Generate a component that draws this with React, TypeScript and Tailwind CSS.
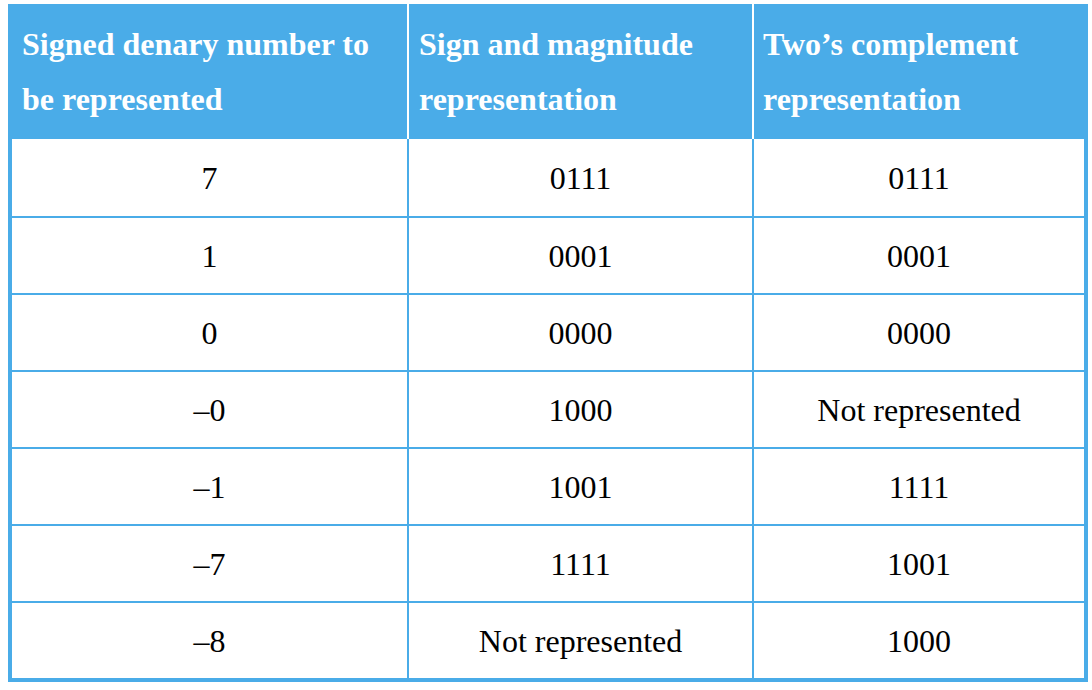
const rows: [string, string, string][] = [
  ["7", "0111", "0111"],
  ["1", "0001", "0001"],
  ["0", "0000", "0000"],
  ["–0", "1000", "Not represented"],
  ["–1", "1001", "1111"],
  ["–7", "1111", "1001"],
  ["–8", "Not represented", "1000"],
];

export default function App() {
  return (
    <div className="min-h-screen w-full bg-white pt-[4px] pl-[8px] font-['Liberation_Serif',serif]">
      <div className="w-[1080px]">
        {/* Header */}
        <div className="grid h-[135px] grid-cols-[399px_343px_334px] gap-x-[2px] bg-white">
          <div className="flex items-center bg-[#4aace8] pl-[14px] pr-2 text-[32px] font-bold leading-[55px] text-white">
            Signed denary number to be represented
          </div>
          <div className="flex items-center bg-[#4aace8] pl-[10px] pr-2 text-[32px] font-bold leading-[55px] text-white">
            Sign and magnitude representation
          </div>
          <div className="flex items-center bg-[#4aace8] pl-[9px] pr-2 text-[32px] font-bold leading-[55px] text-white">
            Two’s complement representation
          </div>
        </div>

        {/* Body */}
        <div className="grid grid-cols-[395px_343px_330px] grid-rows-[77px_repeat(6,75px)] gap-[2px] bg-[#4aace8] px-[4px] pb-[4px]">
          {rows.map((r, i) =>
            r.map((cell, j) => (
              <div
                key={`${i}-${j}`}
                className="flex items-center justify-center bg-white text-[32px] text-black"
              >
                {cell}
              </div>
            ))
          )}
        </div>
      </div>
    </div>
  );
}
